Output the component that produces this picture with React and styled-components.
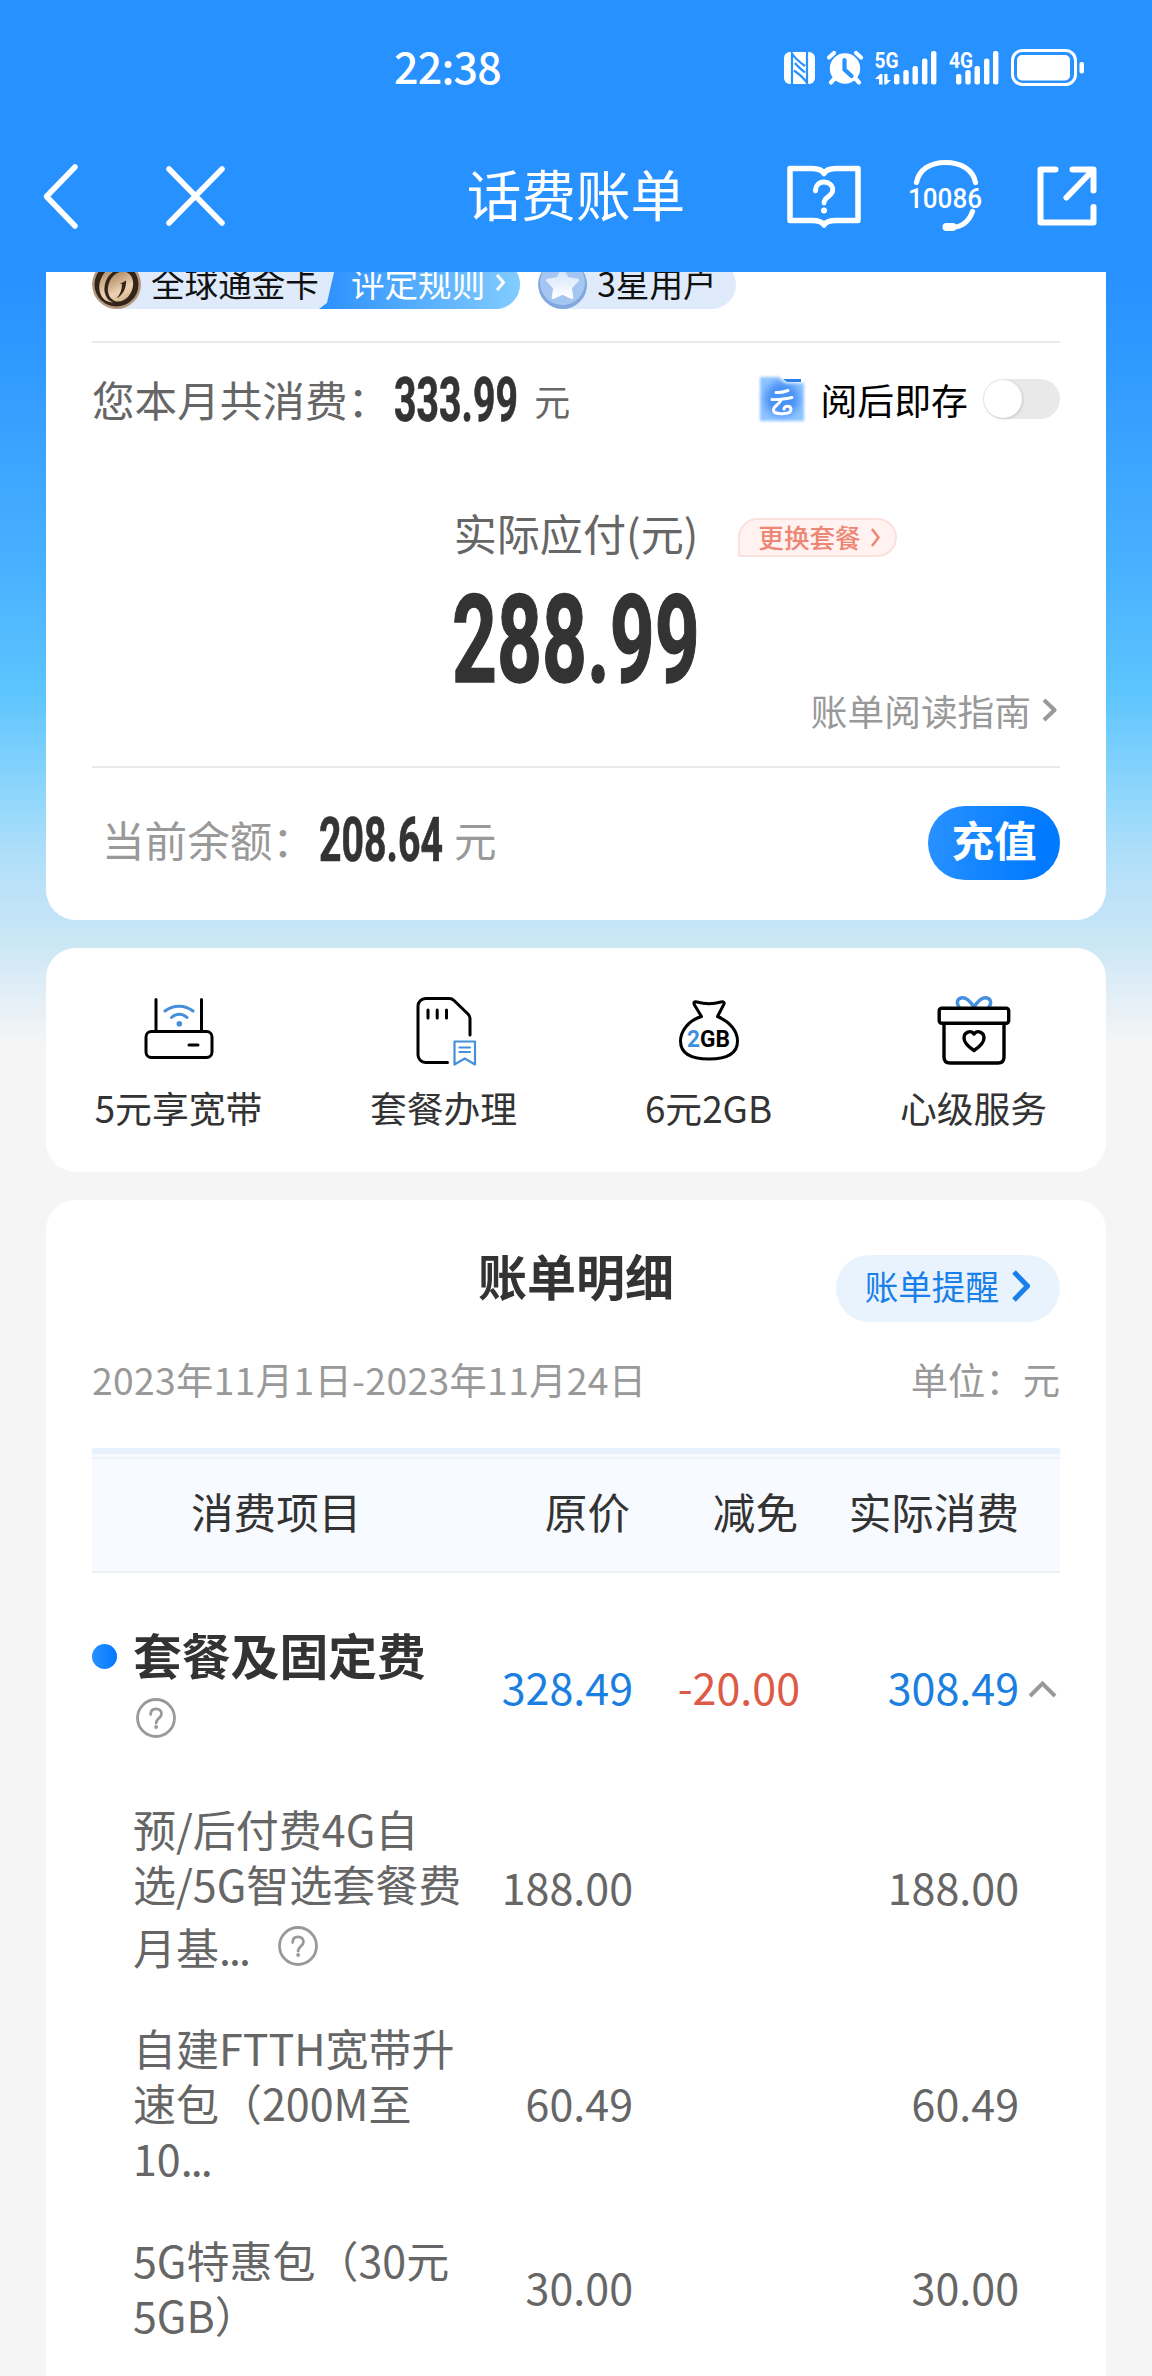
import React from 'react';
import styled, { createGlobalStyle } from 'styled-components';

const GlobalStyle = createGlobalStyle`
  * {
    box-sizing: border-box;
  }

  body {
    margin: 0;
    background: #f5f5f5;
    color: #333;
    font-family: "Noto Sans CJK SC", "Noto Sans", sans-serif;
  }

  svg {
    display: block;
    flex-shrink: 0;
  }
`;

const Page = styled.div`
  width: 1152px;
  height: 2376px;
  overflow: hidden;
  background: linear-gradient(
    #2791ff 272px,
    #2f98ff 350px,
    #47b0ff 560px,
    #5cc4fe 690px,
    #92d7fb 800px,
    #b4e0f9 865px,
    #c5e4f7 925px,
    #cde8f4 948px,
    #dcecf7 980px,
    #f5f5f5 1045px
  );
`;

const TopBar = styled.header`
  height: 272px;
  background: #2791ff;
  color: #fff;
`;

const StatusBar = styled.div`
  display: flex;
  justify-content: space-between;
  height: 120px;
  padding: 44px 67px 0 394px;
`;

const Clock = styled.span`
  margin-top: -1px;
  font-size: 43px;
  font-weight: 500;
  line-height: 44px;
  letter-spacing: -0.8px;
`;

const NavBar = styled.nav`
  display: grid;
  grid-template-columns: 1fr auto 1fr;
  align-items: center;
  height: 152px;
  padding: 0 54px 0 40px;
`;

const NavGroup = styled.div`
  display: flex;
  align-items: center;
  justify-content: ${({ $end }) => ($end ? 'flex-end' : 'flex-start')};
  gap: ${({ $end }) => ($end ? '44px' : '82px')};
`;

const HotlineSlot = styled.span`
  margin: 0 8px 3px 0;
`;

const NavTitle = styled.h1`
  margin: 0 0 7px 14px;
  font-size: 54.6px;
  font-weight: 400;
  line-height: 72px;
`;

const Content = styled.main`
  display: flex;
  flex-direction: column;
  gap: 28px;
  padding: 0 46px;
`;

const Card = styled.section`
  padding: 0 46px;
  background: #fff;
  border-radius: 30px;
`;

/* Its upper part has scrolled away under the top bar. */
const SummaryCard = styled(Card)`
  padding-bottom: 10px;
  border-radius: 0 0 30px 30px;
`;

/* Runs on below the fold. */
const DetailCard = styled(Card)`
  min-height: 1240px;
`;

const Divider = styled.div`
  height: 2px;
  background: #e9e9e9;
`;

const Badges = styled.div`
  display: flex;
  align-items: flex-end;
  gap: 18px;
  height: 37px;
  margin-bottom: 32px;
  overflow: hidden;
`;

const Badge = styled.div`
  display: flex;
  align-items: center;
  flex-shrink: 0;
  height: 49px;
  padding-right: ${({ $end }) => $end || 0}px;
  overflow: hidden;
  border-radius: 25px;
  background: #dfebfb;
  color: #111;
  font-size: 33.6px;
  line-height: 45px;
  white-space: nowrap;
`;

const BadgeText = styled.span`
  margin: 0 0 4px 10px;
`;

const BadgeLink = styled.span`
  display: flex;
  align-items: center;
  gap: 10px;
  height: 49px;
  padding: 0 14px 4px 32px;
  background: linear-gradient(90deg, #2b90fd, #82ccff);
  clip-path: polygon(18px 0, 100% 0, 100% 100%, 0 100%, 8px 88%);
  color: #fff;
`;

const Row = styled.div`
  display: flex;
  align-items: center;
  justify-content: space-between;
  height: ${({ $height }) => $height}px;
`;

const Group = styled.div`
  display: flex;
  align-items: center;
  padding-left: ${({ $indent }) => $indent || 0}px;
`;

const Label = styled.span`
  color: ${({ $muted }) => ($muted ? '#999' : '#666')};
  font-size: 42.6px;
  line-height: 56px;
  white-space: nowrap;
`;

const Unit = styled(Label)`
  margin-left: ${({ $small }) => ($small ? 16 : 11)}px;
  padding-top: ${({ $small }) => ($small ? 2 : 0)}px;
  font-size: ${({ $small }) => ($small ? 36 : 42.6)}px;
`;

/* Condensed numerals: a plain bold face squeezed to the box width. */
const Figure = styled.span`
  display: flex;
  width: ${({ $large }) => ($large ? 248 : 124)}px;
  margin-left: ${({ $large }) => ($large ? 0 : 4)}px;
  padding-top: ${({ $large }) => ($large ? 6 : 3)}px;
  color: #333;
  font-family: Roboto, "Liberation Sans", sans-serif;
  font-size: ${({ $large }) => ($large ? 122 : 61)}px;
  font-weight: 700;
  line-height: 1;
  -webkit-text-stroke: 0.012em #333;

  span {
    transform: scaleX(0.643);
    transform-origin: left center;
  }
`;

const SaveLabel = styled.span`
  margin: 0 15px 1px 14px;
  color: #000;
  font-size: 36.9px;
  line-height: 48px;
`;

const Toggle = styled.span`
  width: 77px;
  height: 40px;
  padding: 1px;
  border-radius: 20px;
  background: #e9e9e9;

  &::before {
    content: '';
    display: block;
    width: 38px;
    height: 38px;
    border-radius: 50%;
    background: #fff;
    box-shadow: 1px 1px 3px rgba(0, 0, 0, 0.15);
  }
`;

const Payable = styled.div`
  display: grid;
  grid-template-columns: 1fr auto 1fr;
  align-items: center;
  height: 60px;
  margin-top: 47px;

  ${Label} {
    grid-column: 2;
    font-size: 43.1px;
  }
`;

const PlanTag = styled.span`
  display: flex;
  align-items: center;
  justify-self: start;
  gap: 9px;
  height: 39px;
  margin: 11px 0 0 40px;
  padding: 0 14px 1px 18px;
  border: 2px solid #fbe0de;
  border-radius: 20px 20px 20px 2px;
  background: #fff2f1;
  color: #ee8674;
  font-size: 25.6px;
  font-weight: 500;
  line-height: 32px;
`;

const Amount = styled.div`
  display: flex;
  align-items: center;
  justify-content: center;
  height: 128px;
  padding-top: 23px;
`;

const Guide = styled.div`
  display: flex;
  align-items: center;
  justify-content: flex-end;
  gap: 11px;
  height: 40px;
  margin-bottom: 36px;
  padding-right: 3px;
  color: #999;
  font-size: 36.7px;
  line-height: 40px;
`;

const Recharge = styled.button`
  width: 132px;
  height: 74px;
  margin-top: 8px;
  padding: 0 0 8px;
  border: 0;
  border-radius: 37px;
  background: linear-gradient(100deg, #2a92ff, #007aff 85%);
  color: #fff;
  font: 700 42.6px/60px "Noto Sans CJK SC", sans-serif;
`;

const Services = styled.section`
  display: grid;
  grid-template-columns: repeat(4, 1fr);
  height: 224px;
  padding-top: 46px;
  border-radius: 30px;
  background: #fff;
`;

const Service = styled.div`
  display: flex;
  flex-direction: column;
  align-items: center;
  gap: 19px;
  font-size: 36.8px;
  line-height: 44px;
`;

const DetailHead = styled.div`
  display: grid;
  grid-template-columns: 1fr auto 1fr;
  align-items: start;
  padding-top: 43px;
`;

const DetailTitle = styled.h2`
  grid-column: 2;
  margin: 0;
  font-size: 49px;
  font-weight: 700;
  line-height: 64px;
`;

const Remind = styled.span`
  display: flex;
  align-items: center;
  justify-self: end;
  gap: 13px;
  height: 67px;
  margin-top: 12px;
  padding: 0 30px 5px 29px;
  border-radius: 34px;
  background: #e8f3fe;
  color: #1a7fe8;
  font-size: 33.6px;
  line-height: 48px;
`;

const Period = styled.div`
  display: flex;
  justify-content: space-between;
  margin: 32px 0 44px;
  color: #999;
  font-size: 37.3px;
  line-height: 50px;

  span:first-child {
    letter-spacing: 0.33px;
  }
`;

const TableRow = styled.div`
  display: grid;
  grid-template-columns: 373px 168px 167px 219px 1fr;
  align-items: center;
  margin-bottom: 47px;
  color: #666;
  font-size: 43px;
  line-height: 55px;
  white-space: nowrap;
`;

const TableHead = styled(TableRow)`
  height: 125px;
  margin-bottom: 51px;
  padding-bottom: 4px;
  border-top: 6px solid #e6f1fd;
  border-bottom: 2px solid #e9f0f7;
  background: #f7faff;
  box-shadow: inset 0 3px #f4faff, inset 0 5px #ebf2f9;
  color: #333;
  font-size: 42.6px;
`;

const GroupRow = styled(TableRow)`
  margin-bottom: 51px;
`;

const Cell = styled.span`
  padding: 0 ${({ $inset }) => $inset || 0}px 1px 0;
  text-align: right;
  color: ${({ $color }) => $color || 'inherit'};
`;

const HeadName = styled.span`
  padding-left: 99px;
`;

const GroupName = styled.div`
  display: grid;
  grid-template-columns: 41px auto;
  grid-template-rows: 60px 1fr;
  justify-content: start;
  align-items: center;
  height: 126px;
`;

const Bullet = styled.i`
  width: 25px;
  height: 25px;
  margin-top: 5px;
  border-radius: 50%;
  background: linear-gradient(90deg, #2a90ff, #007aff);
`;

const GroupTitle = styled.strong`
  color: #333;
  font-size: 48.8px;
  line-height: 60px;
`;

const HelpSlot = styled.div`
  grid-column: 2;
  padding: 2px 0 0 3px;
`;

const ItemName = styled.div`
  padding-left: 41px;
`;

const HelpLine = styled.div`
  display: flex;
  align-items: center;
  height: 62px;
  padding-top: 8px;

  svg {
    margin-left: 29px;
  }
`;

const Dots = styled.span`
  display: inline-block;
  height: 55px;
  letter-spacing: -2px;
  vertical-align: top;
`;

const Caret = styled.span`
  padding: 3px 0 0 9px;
`;

const Chevron = ({ w, h, stroke }) => (
  <svg width={w} height={h} fill="none" stroke="currentColor" strokeWidth={stroke} strokeLinejoin="round">
    <path d={`M2 2 L${w - 2.5} ${h / 2} L2 ${h - 2}`} />
  </svg>
);

const HelpIcon = () => (
  <svg width="40" height="40" viewBox="0 0 40 40" fill="none" stroke="#999" strokeWidth="2.8">
    <circle cx="20" cy="20" r="18.5" />
    <path d="M14.6 16.4c0-3.6 2.3-5.6 5.5-5.6s5.4 2.1 5.4 5c0 4.4-5.4 4.6-5.4 9.2" strokeLinecap="round" />
    <circle cx="20.1" cy="29" r="1.9" fill="#999" stroke="none" />
  </svg>
);

const bars = [
  [0, 10.5],
  [9.3, 14.5],
  [18.5, 18.5],
  [28, 26],
  [37, 33.5],
];

const Signal = ({ x }) =>
  bars.map(([dx, h]) => <rect key={dx} x={x + dx} y={40.5 - h} width="5.4" height={h} rx="2.2" />);

/* NFC, alarm, both SIM signals and the battery */
const StatusIcons = () => (
  <svg width="302" height="50" viewBox="0 0 302 50" fill="#fff">
    <rect x="1" y="8" width="31" height="32" rx="6" />
    <g fill="none" stroke="#2791ff" strokeWidth="2.2">
      <path d="M9 41V9.5c3 5 8 9 13 12.5" />
      <path d="M24 7.5V39c-3-5-8-9-13-12.5" />
      <path d="M12 19c3 4 7 7 10 9.5" />
    </g>
    <circle cx="62" cy="24.5" r="15.2" />
    <path d="M46 13.5l5-4.5M78 13.5L73 9M52 34l-4 4.5M72 34l4 4.5" fill="none" stroke="#fff" strokeWidth="4.2" strokeLinecap="round" />
    <path d="M61.5 16v9.5l7 6.5" fill="none" stroke="#2791ff" strokeWidth="4.2" strokeLinecap="round" />
    <text x="91.5" y="23.5" fontFamily="Roboto, sans-serif" fontSize="22.5" fontWeight="700" textLength="24" lengthAdjust="spacingAndGlyphs">
      5G
    </text>
    <path d="M96 40.5V35h-4l5.2-5h2.3v10.5zM101.3 30h3.2v6h3.5l-4.7 4.5h-2z" />
    <Signal x={111} />
    <text x="166" y="23.5" fontFamily="Roboto, sans-serif" fontSize="22.5" fontWeight="700" textLength="24" lengthAdjust="spacingAndGlyphs">
      4G
    </text>
    <Signal x={173} />
    <rect x="229.5" y="6.5" width="63" height="34" rx="10" fill="none" stroke="#fff" strokeWidth="3" />
    <rect x="234" y="11" width="53" height="25.5" rx="5" />
    <rect x="296.5" y="18" width="4.5" height="11.5" rx="2" />
  </svg>
);

const BackIcon = () => (
  <svg width="42" height="70" viewBox="0 0 42 70" fill="none" stroke="#fff" strokeWidth="5.5" strokeLinecap="round" strokeLinejoin="round">
    <path d="M35 6 6.5 35.5 35 65" />
  </svg>
);

const CloseIcon = () => (
  <svg width="62" height="62" viewBox="0 0 62 62" fill="none" stroke="#fff" strokeWidth="5.5" strokeLinecap="round">
    <path d="M5 4l53 54M58 4 5 58" />
  </svg>
);

const BookIcon = () => (
  <svg width="76" height="74" viewBox="0 0 76 74" fill="none" stroke="#fff" strokeWidth="5.5" strokeLinejoin="round">
    <path d="M4 9.5h22c6 0 10 1.5 12 5 2-3.5 6-5 12-5h22v52H50c-6 0-10 1-12 4.5-2-3.5-6-4.5-12-4.5H4z" />
    <path d="M29.5 32c0-5.5 3.500-9 8.500-9s8.800 3.300 8.800 8c0 6.500-8.800 6.500-8.800 13" strokeWidth="4.8" strokeLinecap="round" />
    <circle cx="38" cy="51.5" r="3" fill="#fff" stroke="none" />
  </svg>
);

const HotlineIcon = () => (
  <svg width="78" height="74" viewBox="0 0 78 74" fill="none" stroke="#fff" strokeWidth="5.2" strokeLinecap="round">
    <path d="M10.5 24.5C13 11.5 24 4.5 39.500 4.500S67 11.500 69.500 24.500" />
    <path d="M66.5 53.5C63.5 62 57 68.5 47 69.500" />
    <path d="M40.5 69h6" strokeWidth="8" />
    <text x="2" y="49.5" fill="#fff" stroke="none" fontFamily="Roboto, sans-serif" fontSize="27.5" fontWeight="500" textLength="74" lengthAdjust="spacingAndGlyphs">
      10086
    </text>
  </svg>
);

const OpenIcon = () => (
  <svg width="62" height="62" viewBox="0 0 62 62" fill="none" stroke="#fff" strokeWidth="6" strokeLinecap="round" strokeLinejoin="round">
    <path d="M19.5 4.5h-15v53h53V42" />
    <path d="M36.5 4.5h21v21M57 5 30.5 32.5" />
  </svg>
);

const GoldMedal = () => (
  <svg width="49" height="49" viewBox="0 0 49 49">
    <defs>
      <linearGradient id="gold" x1="0" y1="0" x2="1" y2="1">
        <stop offset="0" stopColor="#a07a55" />
        <stop offset="0.6" stopColor="#edd2b2" />
        <stop offset="1" stopColor="#c9a57c" />
      </linearGradient>
    </defs>
    <circle cx="24.5" cy="24.5" r="24.5" fill="#b3987c" />
    <circle cx="24.5" cy="24.5" r="22" fill="#33241a" />
    <ellipse cx="23" cy="24" rx="15" ry="19" transform="rotate(24 23 24)" fill="url(#gold)" />
    <ellipse cx="27" cy="26" rx="14" ry="17.5" transform="rotate(24 27 26)" fill="#33241a" />
    <ellipse cx="28.5" cy="26.5" rx="12" ry="15.5" transform="rotate(24 28.5 26.5)" fill="url(#gold)" />
    <path d="M28 24l6-3.5c.5 8-3.5 15-9.5 18 3.5-4 5.5-8.5 5.5-14.500z" fill="#33241a" />
  </svg>
);

const StarMedal = () => (
  <svg width="49" height="49" viewBox="0 0 49 49">
    <defs>
      <linearGradient id="star" x1="0" y1="0" x2="0" y2="1">
        <stop offset="0" stopColor="#cfe3fb" />
        <stop offset="1" stopColor="#fff" />
      </linearGradient>
    </defs>
    <circle cx="24.5" cy="24.5" r="24.5" fill="#80a8df" />
    <circle cx="24.5" cy="22.5" r="22.5" fill="#a6c6f2" />
    <path
      d="M24.5 9.5l4.8 9 10.2 1.7-7.2 7.5 1.5 9.8-9.3-4.4-9.3 4.4 1.5-9.8-7.2-7.5 10.2-1.7z"
      fill="url(#star)"
      stroke="url(#star)"
      strokeWidth="3"
      strokeLinejoin="round"
    />
  </svg>
);

const CloudIcon = () => (
  <svg width="48" height="50" viewBox="0 0 48 50">
    <defs>
      <radialGradient id="cloud">
        <stop offset="0.55" stopColor="#4a93f5" />
        <stop offset="1" stopColor="#8cc2ff" />
      </radialGradient>
      <filter id="glow" x="-10%" y="-10%" width="120%" height="120%">
        <feGaussianBlur stdDeviation="1.8" />
      </filter>
    </defs>
    <path d="M2 3h19l6 6h19v38H2z" fill="url(#cloud)" filter="url(#glow)" />
    <path d="M25 5h18v3H29z" fill="#2c7fe8" />
    <g fill="none" stroke="#fff" strokeWidth="3" strokeLinecap="round">
      <path d="M18 18.5c4 .5 8-.5 12-2" />
      <path d="M14 25.5c6 .5 13-.5 20-2" />
      <path d="M23 26c-2 5-8 6-7.5 10.5.5 4.5 17.5 4.500 17.500-1 0-4.500-7-4-7-.5" />
    </g>
  </svg>
);

const RouterIcon = () => (
  <svg width="80" height="72" viewBox="0 0 80 72" fill="none" stroke="#000" strokeWidth="3" strokeLinecap="round">
    <rect x="7" y="37.5" width="66" height="26" rx="5.5" />
    <path d="M17 37V5.500M62.500 37V5.500M50 51h9" />
    <g stroke="#4590d8">
      <path d="M26 17c8-6.500 20-6.500 28 0M32.500 23.500c4.500-4.200 11-4.200 15.500 0" />
      <circle cx="40.3" cy="29.7" r="1.3" fill="#4590d8" />
    </g>
  </svg>
);

const SimIcon = () => (
  <svg width="80" height="72" viewBox="0 0 80 72" fill="none" stroke="#000" strokeWidth="3" strokeLinecap="round" strokeLinejoin="round">
    <path d="M43.500 68.500H21.500a7.500 7.500 0 0 1-7.500-7.500V12a7.500 7.500 0 0 1 7.500-7.500h24c2 0 3 .5 4.500 2l14 13.500c1.500 1.500 2 2.800 2 4.500V41" />
    <path d="M24 16v8M33.200 16v8M42.500 16v8" />
    <path d="M50.500 47.500h20.500v23l-10.200-6-10.300 6zM55.500 53.500h10.500M55.500 58h10.500" stroke="#4590d8" strokeWidth="2.2" />
  </svg>
);

const BagIcon = () => (
  <svg width="80" height="72" viewBox="0 0 80 72" fill="none" stroke="#000" strokeWidth="3" strokeLinejoin="round">
    <path d="M32.500 22.500 25.500 11c-1.500-3 0-3.500 2.500-3 8 2.200 16 2.200 24 0 2.500-.6 4.200.3 2.500 3l-6 11.500C61.500 28 68.500 37.500 68.500 47c0 12-9 18-28.500 18s-28.500-6-28.500-18C11.500 37.500 19 26.500 32.500 22.500z" />
    <text x="18" y="53" stroke="none" fill="#000" fontFamily="Roboto, sans-serif" fontSize="24" fontWeight="700" textLength="43" lengthAdjust="spacingAndGlyphs">
      <tspan fill="#3f8fe0">2</tspan>GB
    </text>
  </svg>
);

const GiftIcon = () => (
  <svg width="80" height="72" viewBox="0 0 80 72" fill="none" stroke="#000" strokeWidth="3.4" strokeLinejoin="round">
    <path
      d="M40 13c-4-6-9-10-13-9-4 1-5 5.500-1.500 9.500M40 13c4-6 9-10 13-9 4 1 5 5.500 1.500 9.500"
      stroke="#4590e0"
    />
    <rect x="5.2" y="14.2" width="69.5" height="15" rx="2.5" />
    <path d="M10 30v33c0 4 2.500 6 6 6h48c3.500 0 6-2 6-6V30" />
    <path d="M40 56.500c-6-4-10-8-10-12.500 0-6 7-8.500 10-4 3-4.500 10-2 10 4 0 4.500-4 8.500-10 12.500z" />
  </svg>
);

const services = [
  { name: '5元享宽带', icon: <RouterIcon /> },
  { name: '套餐办理', icon: <SimIcon /> },
  { name: '6元2GB', icon: <BagIcon /> },
  { name: '心级服务', icon: <GiftIcon /> },
];

const items = [
  { lines: ['预/后付费4G自', '选/5G智选套餐费', '月基'], cut: true, help: true, price: '188.00', actual: '188.00' },
  { lines: ['自建FTTH宽带升', '速包（200M至', '10'], cut: true, price: '60.49', actual: '60.49' },
  { lines: ['5G特惠包（30元', '5GB）'], price: '30.00', actual: '30.00' },
];

const Item = ({ lines, cut, help, price, actual }) => {
  const tail = (
    <div>
      {lines[lines.length - 1]}
      {cut && <Dots>...</Dots>}
    </div>
  );

  return (
    <TableRow>
      <ItemName>
        {lines.slice(0, -1).map((line) => (
          <div key={line}>{line}</div>
        ))}
        {help ? (
          <HelpLine>
            {tail}
            <HelpIcon />
          </HelpLine>
        ) : (
          tail
        )}
      </ItemName>
      <Cell>{price}</Cell>
      <Cell />
      <Cell>{actual}</Cell>
    </TableRow>
  );
};

export default function App() {
  return (
    <Page>
      <GlobalStyle />
      <TopBar>
        <StatusBar>
          <Clock>22:38</Clock>
          <StatusIcons />
        </StatusBar>
        <NavBar>
          <NavGroup>
            <BackIcon />
            <CloseIcon />
          </NavGroup>
          <NavTitle>话费账单</NavTitle>
          <NavGroup $end>
            <BookIcon />
            <HotlineSlot>
              <HotlineIcon />
            </HotlineSlot>
            <OpenIcon />
          </NavGroup>
        </NavBar>
      </TopBar>

      <Content>
        <SummaryCard>
          <Badges>
            <Badge>
              <GoldMedal />
              <BadgeText>全球通金卡</BadgeText>
              <BadgeLink>
                评定规则
                <Chevron w={11} h={19} stroke={3} />
              </BadgeLink>
            </Badge>
            <Badge $end={19}>
              <StarMedal />
              <BadgeText>3星用户</BadgeText>
            </Badge>
          </Badges>
          <Divider />
          <Row $height={112}>
            <Group>
              <Label>您本月共消费：</Label>
              <Figure>
                <span>333.99</span>
              </Figure>
              <Unit $small>元</Unit>
            </Group>
            <Group>
              <CloudIcon />
              <SaveLabel>阅后即存</SaveLabel>
              <Toggle />
            </Group>
          </Row>
          <Payable>
            <Label>实际应付(元)</Label>
            <PlanTag>
              更换套餐
              <Chevron w={11} h={21} stroke={2.6} />
            </PlanTag>
          </Payable>
          <Amount>
            <Figure $large>
              <span>288.99</span>
            </Figure>
          </Amount>
          <Guide>
            账单阅读指南
            <Chevron w={15} h={24} stroke={4} />
          </Guide>
          <Divider />
          <Row $height={142}>
            <Group $indent={10}>
              <Label $muted>当前余额：</Label>
              <Figure>
                <span>208.64</span>
              </Figure>
              <Unit $muted>元</Unit>
            </Group>
            <Recharge>充值</Recharge>
          </Row>
        </SummaryCard>

        <Services>
          {services.map(({ name, icon }) => (
            <Service key={name}>
              {icon}
              <span>{name}</span>
            </Service>
          ))}
        </Services>

        <DetailCard>
          <DetailHead>
            <DetailTitle>账单明细</DetailTitle>
            <Remind>
              账单提醒
              <Chevron w={18} h={32} stroke={5} />
            </Remind>
          </DetailHead>
          <Period>
            <span>2023年11月1日-2023年11月24日</span>
            <span>单位：元</span>
          </Period>
          <TableHead>
            <HeadName>消费项目</HeadName>
            <Cell $inset={3}>原价</Cell>
            <Cell $inset={2}>减免</Cell>
            <Cell>实际消费</Cell>
          </TableHead>
          <GroupRow>
            <GroupName>
              <Bullet />
              <GroupTitle>套餐及固定费</GroupTitle>
              <HelpSlot>
                <HelpIcon />
              </HelpSlot>
            </GroupName>
            <Cell $color="#1a7fe0">328.49</Cell>
            <Cell $color="#dc5a46">-20.00</Cell>
            <Cell $color="#1a7fe0">308.49</Cell>
            <Caret>
              <svg width="29" height="18" fill="none" stroke="#999" strokeWidth="4">
                <path d="M2 16 14.5 3.5 27 16" />
              </svg>
            </Caret>
          </GroupRow>
          {items.map((item) => (
            <Item key={item.lines[0]} {...item} />
          ))}
        </DetailCard>
      </Content>
    </Page>
  );
}
